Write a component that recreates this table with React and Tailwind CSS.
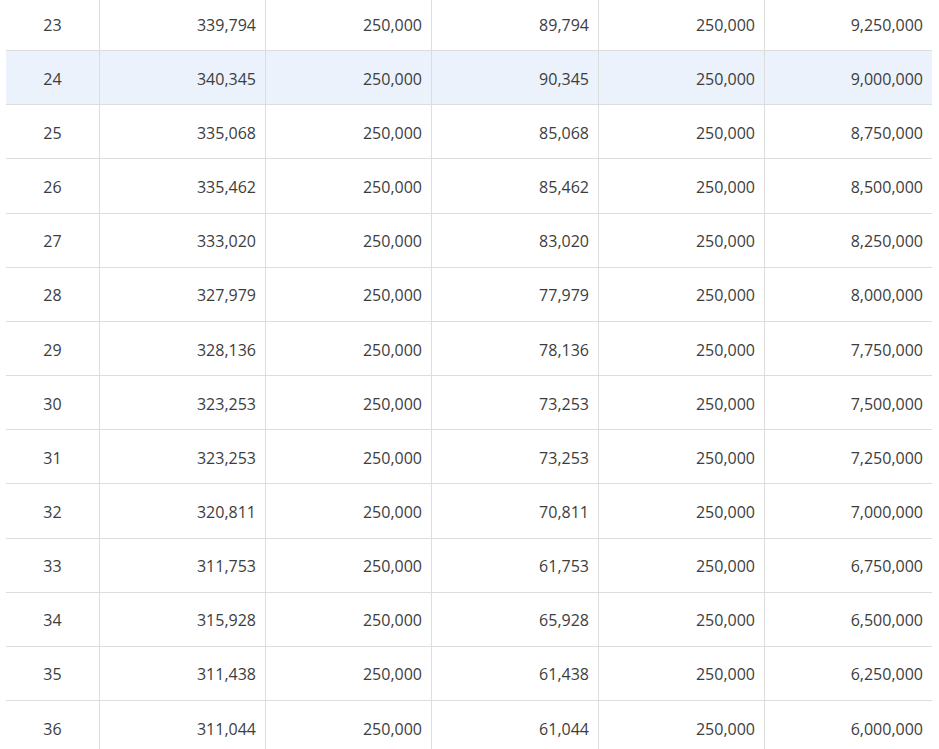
const rows = [
  [23, "339,794", "250,000", "89,794", "250,000", "9,250,000"],
  [24, "340,345", "250,000", "90,345", "250,000", "9,000,000"],
  [25, "335,068", "250,000", "85,068", "250,000", "8,750,000"],
  [26, "335,462", "250,000", "85,462", "250,000", "8,500,000"],
  [27, "333,020", "250,000", "83,020", "250,000", "8,250,000"],
  [28, "327,979", "250,000", "77,979", "250,000", "8,000,000"],
  [29, "328,136", "250,000", "78,136", "250,000", "7,750,000"],
  [30, "323,253", "250,000", "73,253", "250,000", "7,500,000"],
  [31, "323,253", "250,000", "73,253", "250,000", "7,250,000"],
  [32, "320,811", "250,000", "70,811", "250,000", "7,000,000"],
  [33, "311,753", "250,000", "61,753", "250,000", "6,750,000"],
  [34, "315,928", "250,000", "65,928", "250,000", "6,500,000"],
  [35, "311,438", "250,000", "61,438", "250,000", "6,250,000"],
  [36, "311,044", "250,000", "61,044", "250,000", "6,000,000"],
];

export default function App() {
  return (
    <div
      className="w-[939px] h-[749px] overflow-hidden bg-white text-[16px] text-[#3d3d3d]"
      style={{ fontFamily: '"Open Sans", "Liberation Sans", sans-serif' }}
    >
      <div className="ml-[6px] w-[926px] -mt-[3px]">
        {rows.map((r) => (
          <div
            key={r[0]}
            className={
              "grid grid-cols-[93px_166px_166px_167px_166px_168px] h-[54.17px] border-b border-[#dddddd] " +
              (r[0] === 24 ? "bg-[#ebf2fb]" : "bg-white")
            }
          >
            <div className="flex items-center justify-center pt-[2px]">{r[0]}</div>
            {r.slice(1).map((v, i) => (
              <div
                key={i}
                className="flex items-center justify-end pr-[9px] pt-[2px] border-l border-[#dddddd]"
              >
                {v}
              </div>
            ))}
          </div>
        ))}
      </div>
    </div>
  );
}
